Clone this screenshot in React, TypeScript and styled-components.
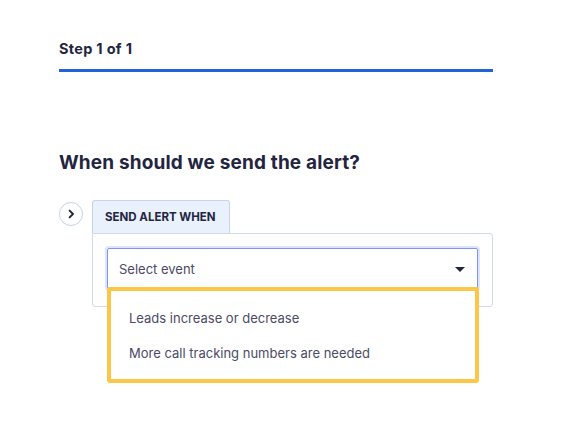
import React from "react";
import styled, { createGlobalStyle } from "styled-components";

const GlobalStyle = createGlobalStyle`
  html, body {
    margin: 0;
    padding: 0;
    background: #ffffff;
  }
  body {
    font-family: Inter, "Noto Sans", "Liberation Sans", sans-serif;
    color: #23253f;
  }
`;

const Page = styled.main`
  width: 434px;
  min-height: 430px;
  padding: 0 0 0 59px;
`;

const StepHeader = styled.div`
  padding: 40px 0 11px;
  border-bottom: 3px solid #2362d8;
  font-size: 14.5px;
  line-height: 18px;
  font-weight: 700;
  letter-spacing: 0.3px;
  color: #23253f;
`;

const Heading = styled.h2`
  margin: 79px 0 0;
  font-size: 19px;
  line-height: 24px;
  font-weight: 700;
  letter-spacing: 0.15px;
  color: #23253f;
`;

const Row = styled.div`
  display: flex;
  align-items: flex-start;
  gap: 9px;
  margin-top: 25px;
`;

const ToggleButton = styled.button`
  flex: none;
  box-sizing: border-box;
  width: 24px;
  height: 24px;
  margin: 2px 0 0 0;
  padding: 0;
  border: 1px solid #c7d2e2;
  border-radius: 50%;
  background: #ffffff;
  display: flex;
  align-items: center;
  justify-content: center;
  color: #23253f;
`;

const Panel = styled.section`
  width: 402px;
`;

const Tab = styled.div`
  display: inline-block;
  box-sizing: border-box;
  height: 33px;
  padding: 0 13px 0 12px;
  background: #e9f1fd;
  border: 1px solid #c9d5e6;
  border-bottom: none;
  border-radius: 3px 3px 0 0;
  font-size: 11.5px;
  line-height: 32px;
  font-weight: 700;
  text-transform: uppercase;
  color: #23253f;
  vertical-align: bottom;
`;

const Card = styled.div`
  position: relative;
  box-sizing: border-box;
  border: 1px solid #d2dae6;
  border-radius: 0 3px 3px 3px;
  padding: 14px;
  height: 74px;
`;

const Select = styled.div`
  box-sizing: border-box;
  height: 41px;
  display: flex;
  align-items: center;
  justify-content: space-between;
  padding: 0 12px 0 11px;
  border: 1px solid #7d94f3;
  border-radius: 2px;
  box-shadow: 0 0 0 2px rgba(125, 148, 243, 0.25);
  font-size: 13px;
  color: #4a4b66;
`;

const Caret = styled.span`
  width: 0;
  height: 0;
  border-left: 5px solid transparent;
  border-right: 5px solid transparent;
  border-top: 5px solid #23253f;
  margin-top: 1px;
`;

const Menu = styled.ul`
  position: absolute;
  left: 14px;
  top: 53px;
  z-index: 2;
  box-sizing: border-box;
  width: 372px;
  height: 96px;
  margin: 0;
  padding: 10px 0 0;
  list-style: none;
  background: #ffffff;
  border: 4px solid #fcc646;
  border-radius: 3px;
`;

const Option = styled.li`
  padding: 0 18px;
  font-size: 13px;
  line-height: 35px;
  color: #4a4b66;
`;

export default function App() {
  return (
    <>
      <GlobalStyle />
      <Page>
        <StepHeader>Step 1 of 1</StepHeader>
        <Heading>When should we send the alert?</Heading>
        <Row>
          <ToggleButton aria-label="Expand">
            <svg width="10" height="10" viewBox="0 0 10 10" fill="none">
              <path
                d="M3.6 1.6 L7 5 L3.6 8.4"
                stroke="currentColor"
                strokeWidth="1.9"
                strokeLinecap="round"
                strokeLinejoin="round"
              />
            </svg>
          </ToggleButton>
          <Panel>
            <Tab>Send alert when</Tab>
            <Card>
              <Select>
                <span>Select event</span>
                <Caret />
              </Select>
              <Menu>
                <Option>Leads increase or decrease</Option>
                <Option>More call tracking numbers are needed</Option>
              </Menu>
            </Card>
          </Panel>
        </Row>
      </Page>
    </>
  );
}
